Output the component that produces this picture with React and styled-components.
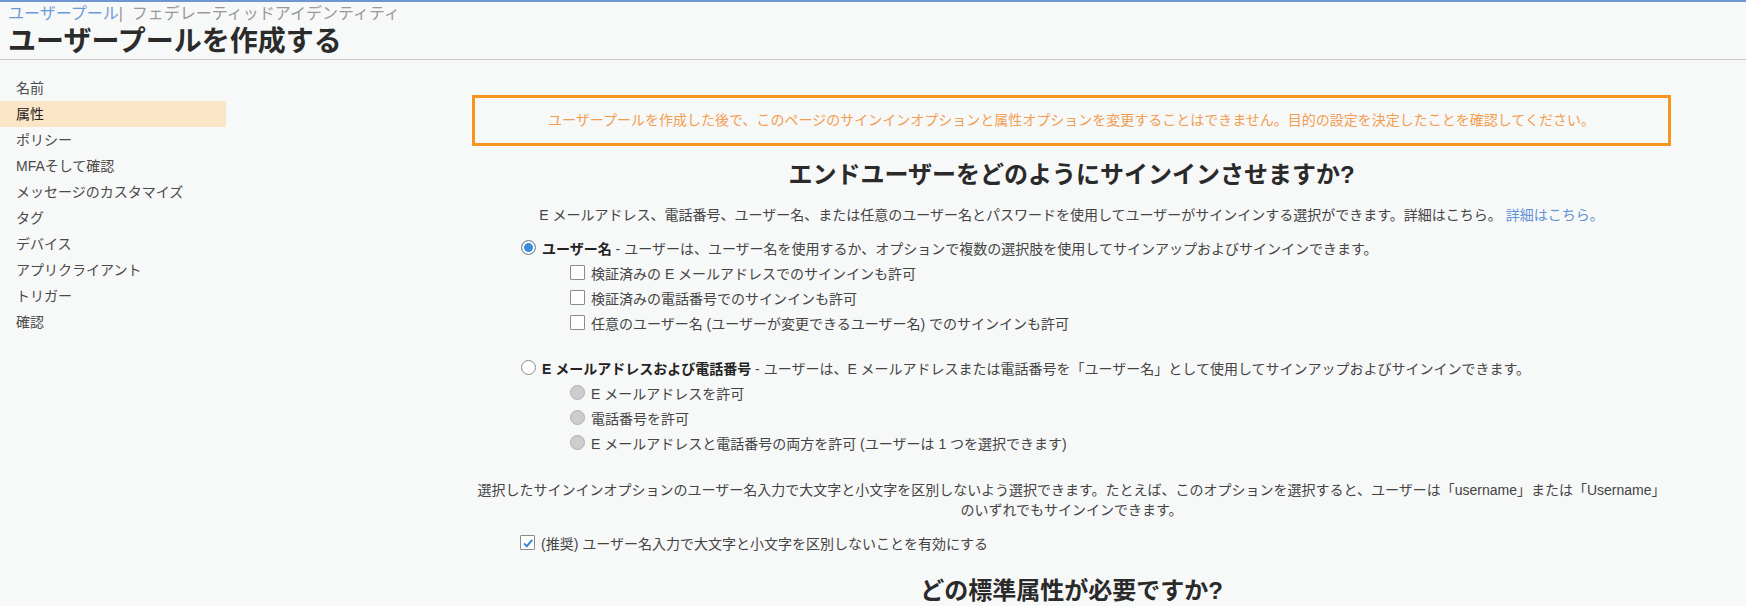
import React from 'react'
import styled, { createGlobalStyle } from 'styled-components'

const GlobalStyle = createGlobalStyle`
  html, body {
    margin: 0;
    padding: 0;
    background: #f7f8f8;
    height: 606px;
    overflow: hidden;
  }
  body {
    font-family: "Liberation Sans", "Noto Sans CJK JP", sans-serif;
    color: #444;
    font-size: 14px;
  }
`

const Page = styled.div`
  width: 1746px;
  height: 606px;
  overflow: hidden;
`

const Header = styled.header`
  border-top: 2px solid #7096d0;
  border-bottom: 1px solid #c8c8c8;
  padding: 0 8px 1px;
`

const Crumbs = styled.div`
  font-size: 16px;
  line-height: 24px;
  color: #999;
  white-space: nowrap;
`

const CrumbLink = styled.a`
  color: #6b9bd8;
  text-decoration: none;
`

const Title = styled.h1`
  margin: 0;
  font-size: 28px;
  line-height: 32px;
  font-weight: 700;
  color: #2b2b2b;
`

const Body = styled.div`
  display: flex;
`

const Sidebar = styled.nav`
  width: 226px;
  flex-shrink: 0;
  padding-top: 15px;
`

const NavItem = styled.div`
  height: 26px;
  line-height: 26px;
  padding-left: 16px;
  font-size: 14px;
  color: ${p => (p.$active ? '#222' : '#4a4a4a')};
  background: ${p => (p.$active ? '#fbe5c6' : 'transparent')};
`

const Main = styled.main`
  flex: 1;
  padding: 35px 75px 0 246px;
`

const Notice = styled.div`
  border: 3px solid #f7951e;
  height: 45px;
  line-height: 45px;
  text-align: center;
  color: #f29d50;
  font-size: 14px;
`

const Heading = styled.h2`
  margin: ${p => p.$top}px 0 0;
  font-size: 24px;
  line-height: 30px;
  font-weight: 700;
  color: #2a2a2a;
  text-align: center;
`

const Para = styled.p`
  margin: ${p => p.$top}px 0 0;
  line-height: 20px;
  text-align: center;
`

const Link = styled.a`
  color: #5f93d5;
  text-decoration: none;
`

const Options = styled.div`
  margin-top: ${p => p.$top}px;
  padding-left: ${p => p.$indent}px;
`

const Row = styled.label`
  display: flex;
  align-items: center;
  gap: 6px;
  height: 25px;
  white-space: nowrap;
  padding-left: ${p => p.$indent || 0}px;
`

const Radio = styled.span`
  box-sizing: border-box;
  width: 15px;
  height: 15px;
  border-radius: 50%;
  flex-shrink: 0;
  border: 1px solid ${p => (p.$disabled ? '#aeaeae' : '#8c8c8c')};
  background: ${p => (p.$checked ? '#3a8edc' : p.$disabled ? '#cdcdcd' : '#fff')};
  box-shadow: ${p => (p.$checked ? 'inset 0 0 0 2px #fff' : 'none')};
`

const Box = styled.span`
  box-sizing: border-box;
  width: 15px;
  height: 15px;
  flex-shrink: 0;
  border: 1px solid #8c8c8c;
  border-radius: 1px;
  background: #fff;
  display: flex;
  align-items: center;
  justify-content: center;
`

const Strong = styled.b`
  color: #222;
  font-weight: 700;
`

const Check = () => (
  <svg width="12" height="12" viewBox="0 0 12 12">
    <path d="M2 6.4 L4.8 9.2 L10.2 2.8" fill="none" stroke="#3a86d4" strokeWidth="2" />
  </svg>
)

const navItems = [
  '名前',
  '属性',
  'ポリシー',
  'MFAそして確認',
  'メッセージのカスタマイズ',
  'タグ',
  'デバイス',
  'アプリクライアント',
  'トリガー',
  '確認',
]

const App = () => (
  <Page>
    <GlobalStyle />
    <Header>
      <Crumbs>
        <CrumbLink href="#">ユーザープール</CrumbLink>|&nbsp; フェデレーティッドアイデンティティ
      </Crumbs>
      <Title>ユーザープールを作成する</Title>
    </Header>
    <Body>
      <Sidebar>
        {navItems.map(item => (
          <NavItem key={item} $active={item === '属性'}>
            {item}
          </NavItem>
        ))}
      </Sidebar>
      <Main>
        <Notice>
          ユーザープールを作成した後で、このページのサインインオプションと属性オプションを変更することはできません。目的の設定を決定したことを確認してください。
        </Notice>
        <Heading $top={14}>エンドユーザーをどのようにサインインさせますか?</Heading>
        <Para $top={15}>
          E メールアドレス、電話番号、ユーザー名、または任意のユーザー名とパスワードを使用してユーザーがサインインする選択ができます。詳細はこちら。{' '}
          <Link href="#">詳細はこちら。</Link>
        </Para>

        <Options $top={10} $indent={49}>
          <Row>
            <Radio $checked />
            <span>
              <Strong>ユーザー名</Strong> - ユーザーは、ユーザー名を使用するか、オプションで複数の選択肢を使用してサインアップおよびサインインできます。
            </span>
          </Row>
          <Row $indent={49}>
            <Box />
            検証済みの E メールアドレスでのサインインも許可
          </Row>
          <Row $indent={49}>
            <Box />
            検証済みの電話番号でのサインインも許可
          </Row>
          <Row $indent={49}>
            <Box />
            任意のユーザー名 (ユーザーが変更できるユーザー名) でのサインインも許可
          </Row>
        </Options>

        <Options $top={20} $indent={49}>
          <Row>
            <Radio />
            <span>
              <Strong>E メールアドレスおよび電話番号</Strong> - ユーザーは、E メールアドレスまたは電話番号を「ユーザー名」として使用してサインアップおよびサインインできます。
            </span>
          </Row>
          <Row $indent={49}>
            <Radio $disabled />
            E メールアドレスを許可
          </Row>
          <Row $indent={49}>
            <Radio $disabled />
            電話番号を許可
          </Row>
          <Row $indent={49}>
            <Radio $disabled />
            E メールアドレスと電話番号の両方を許可 (ユーザーは 1 つを選択できます)
          </Row>
        </Options>

        <Para $top={25}>
          選択したサインインオプションのユーザー名入力で大文字と小文字を区別しないよう選択できます。たとえば、このオプションを選択すると、ユーザーは「username」または「Username」
          <br />
          のいずれでもサインインできます。
        </Para>

        <Options $top={10} $indent={48}>
          <Row>
            <Box>
              <Check />
            </Box>
            (推奨) ユーザー名入力で大文字と小文字を区別しないことを有効にする
          </Row>
        </Options>

        <Heading $top={21}>どの標準属性が必要ですか?</Heading>
      </Main>
    </Body>
  </Page>
)

export default App
